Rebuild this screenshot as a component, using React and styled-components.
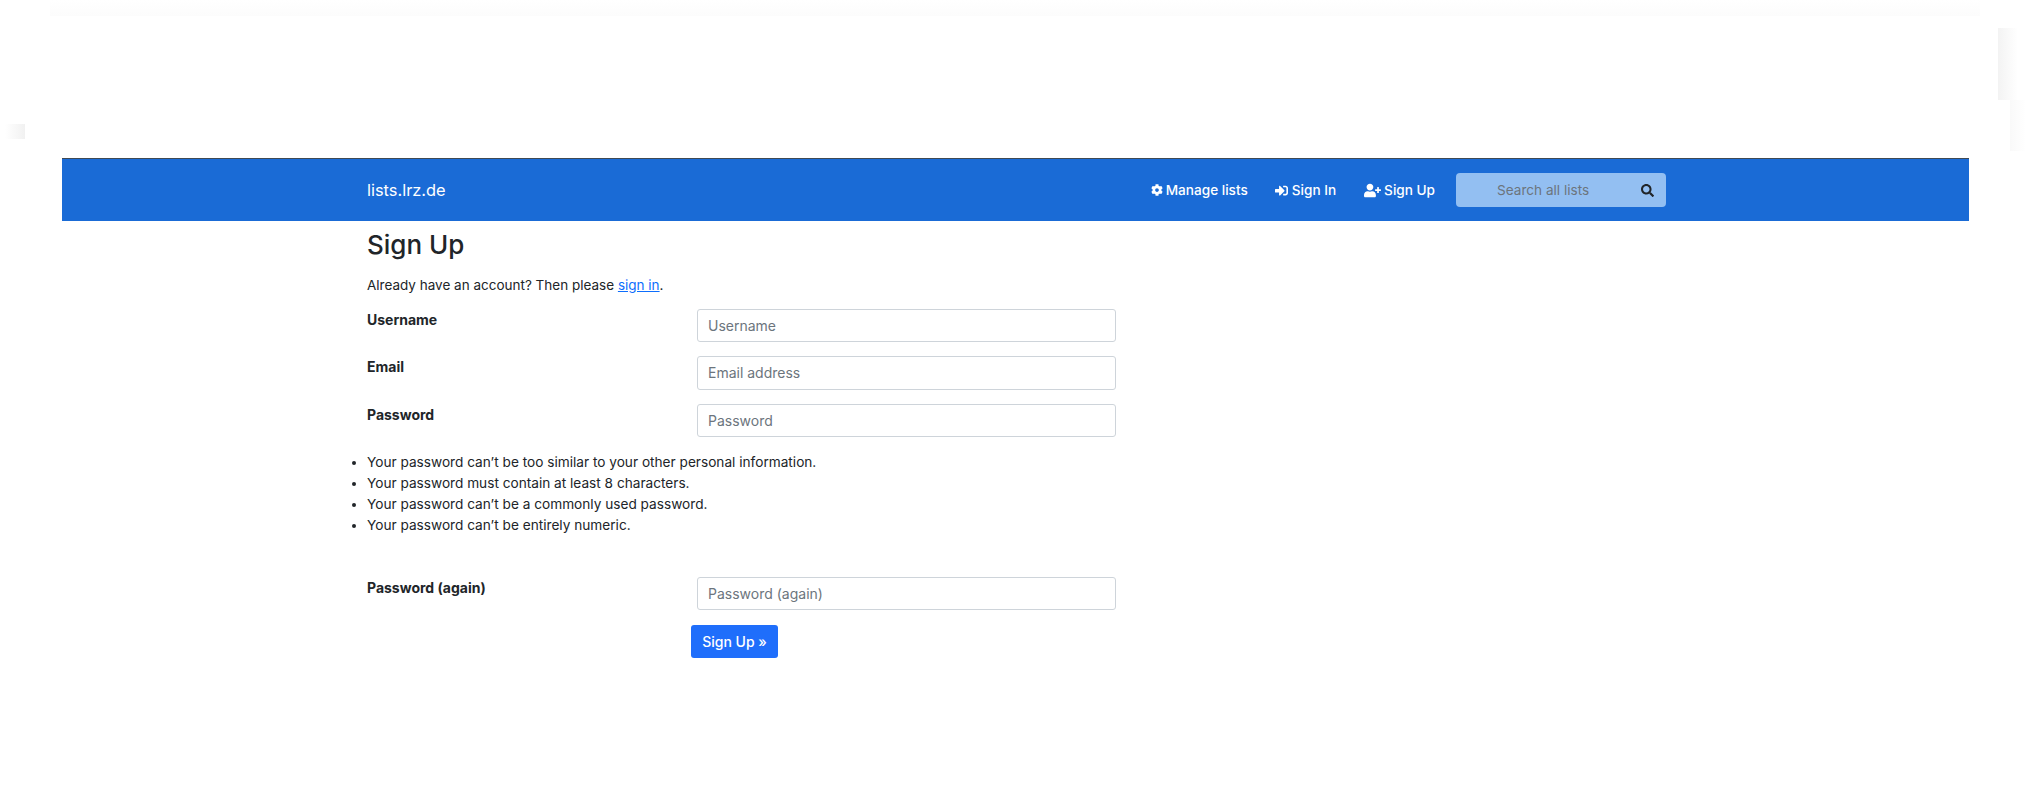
import React from 'react'
import styled, { createGlobalStyle } from 'styled-components'
import { FaCog, FaSearch, FaSignInAlt, FaUserPlus } from 'react-icons/fa'

const GlobalStyle = createGlobalStyle`
  html, body {
    margin: 0;
    background: #fff;
    color: #212529;
    font-family: Inter, "Liberation Sans", sans-serif;
    font-size: 14px;
    line-height: 21px;
  }
`

const Page = styled.div`
  position: relative;
  min-height: 800px;
  padding-top: 158px;
  box-sizing: border-box;
  overflow: hidden;
`

const Smudge = styled.div`
  position: absolute;
  top: ${(p) => p.$top}px;
  left: ${(p) => p.$left}px;
  width: ${(p) => p.$width}px;
  height: ${(p) => p.$height}px;
  background: linear-gradient(${(p) => p.$dir}, ${(p) => p.$from}, #fff);
`

const Navbar = styled.nav`
  margin: 0 63px 0 62px;
  height: 63px;
  box-sizing: border-box;
  border-top: 1px solid #3f4a55;
  background: #1a6bd6;
  padding: 0 303px 0 305px;
  display: flex;
  align-items: center;
  justify-content: space-between;
`

const Brand = styled.a`
  color: #fff;
  font-size: 16.4px;
  line-height: 26px;
`

const NavRight = styled.div`
  display: flex;
  align-items: center;
`

const NavLink = styled.a`
  display: flex;
  align-items: center;
  gap: ${(p) => p.$iconGap}px;
  color: #fff;
  font-size: 13.6px;
  font-weight: 500;
  margin-right: ${(p) => p.$gap}px;
`

const SearchBox = styled.div`
  width: 210px;
  height: 34px;
  box-sizing: border-box;
  border-radius: 4px;
  background: #93bff2;
  display: flex;
  align-items: center;
  padding: 0 12px 0 41px;
  color: #212529;
  font-size: 13.6px;
`

const SearchInput = styled.input`
  flex: 1;
  min-width: 0;
  border: 0;
  outline: 0;
  padding: 0;
  background: transparent;
  font: inherit;
  &::placeholder {
    color: #6c757d;
    opacity: 1;
  }
`

const Main = styled.main`
  width: 750px;
  margin-left: 367px;
`

const Title = styled.h1`
  margin: 7px 0 0;
  font-size: 26px;
  line-height: 33.6px;
  font-weight: 500;
`

const Intro = styled.p`
  margin: 13px 0 13px;
  font-size: 13.5px;
`

const Link = styled.a`
  color: #0d6efd;
  text-decoration: underline;
`

const Row = styled.div`
  display: grid;
  grid-template-columns: 330px 419px;
  margin-bottom: ${(p) => p.$gap}px;
`

const Label = styled.label`
  font-weight: 650;
  line-height: 21px;
`

const Input = styled.input`
  width: 100%;
  height: 33.5px;
  box-sizing: border-box;
  border: 1px solid #ced4da;
  border-radius: 3px;
  padding: 0 10px;
  background: #fff;
  font: inherit;
  color: #212529;
  &::placeholder {
    color: #6c757d;
    opacity: 1;
  }
`

const HelpList = styled.ul`
  margin: 0 0 40.5px;
  padding: 1px 0 0;
  list-style: disc;
`

const HelpItem = styled.li`
  font-size: 13.65px;
  line-height: 21px;
`

const Submit = styled.button`
  display: block;
  margin-left: 324px;
  width: 87px;
  height: 33px;
  border: 0;
  border-radius: 3px;
  background: #1f6efb;
  color: #fff;
  font: inherit;
  font-weight: 500;
  padding: 0;
`

const fields = [
  { label: 'Username', placeholder: 'Username', type: 'text', gap: 14 },
  { label: 'Email', placeholder: 'Email address', type: 'email', gap: 14 },
  { label: 'Password', placeholder: 'Password', type: 'password', gap: 14 },
]

const rules = [
  'Your password can’t be too similar to your other personal information.',
  'Your password must contain at least 8 characters.',
  'Your password can’t be a commonly used password.',
  'Your password can’t be entirely numeric.',
]

export default function App() {
  return (
    <Page>
      <GlobalStyle />
      <Smudge $top={0} $left={50} $width={1930} $height={16} $dir="to top" $from="#fcfcfc" />
      <Smudge $top={124} $left={5} $width={20} $height={15} $dir="to left" $from="#f1f1f1" />
      <Smudge $top={28} $left={1998} $width={20} $height={72} $dir="to right" $from="#f3f3f3" />
      <Smudge $top={100} $left={2010} $width={16} $height={51} $dir="to right" $from="#f9f9f9" />
      <Navbar>
        <Brand>lists.lrz.de</Brand>
        <NavRight>
          <NavLink $gap={27} $iconGap={3}>
            <FaCog size={12} /> Manage lists
          </NavLink>
          <NavLink $gap={28} $iconGap={4}>
            <FaSignInAlt size={13} /> Sign In
          </NavLink>
          <NavLink $gap={21} $iconGap={3}>
            <FaUserPlus size={17} /> Sign Up
          </NavLink>
          <SearchBox>
            <SearchInput placeholder="Search all lists" />
            <FaSearch size={13} />
          </SearchBox>
        </NavRight>
      </Navbar>
      <Main>
        <Title>Sign Up</Title>
        <Intro>
          Already have an account? Then please <Link>sign in</Link>.
        </Intro>
        {fields.map((f) => (
          <Row key={f.label} $gap={f.gap}>
            <Label>{f.label}</Label>
            <Input placeholder={f.placeholder} type={f.type} />
          </Row>
        ))}
        <HelpList>
          {rules.map((r) => (
            <HelpItem key={r}>{r}</HelpItem>
          ))}
        </HelpList>
        <Row $gap={15}>
          <Label>Password (again)</Label>
          <Input placeholder="Password (again)" type="password" />
        </Row>
        <Submit>Sign Up »</Submit>
      </Main>
    </Page>
  )
}
